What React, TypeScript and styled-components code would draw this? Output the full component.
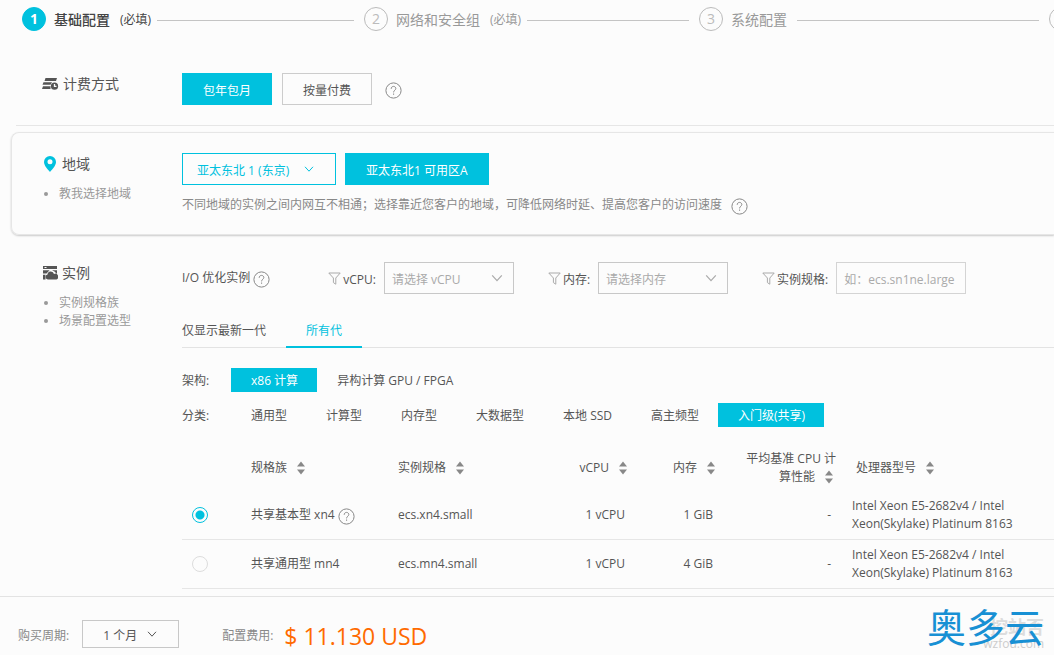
import React from "react";
import styled, { createGlobalStyle, css } from "styled-components";

const cyan = "#00c1de";

const GlobalStyle = createGlobalStyle`
  *, *::before, *::after { box-sizing: border-box; }
  body {
    margin: 0;
    background: #fcfcfc;
    color: #555;
    font: 12px/18px "Open Sans", "Noto Sans CJK SC", sans-serif;
    overflow-x: hidden;
  }
  button, input, select { font: inherit; color: inherit; margin: 0; }
  button { background: none; border: 0; padding: 0; cursor: pointer; }
  a { color: inherit; text-decoration: none; }
`;

const Page = styled.div`
  min-height: 100vh;
  display: flex;
  flex-direction: column;
  overflow: hidden;
`;

const Main = styled.main`
  flex: 1;
`;

/* Stepper */
const Steps = styled.ol`
  list-style: none;
  margin: 0;
  padding: 0 0 0 22px;
  height: 38px;
  display: grid;
  grid-template-columns: 342fr 335fr 350fr 5fr;
`;

const Step = styled.li<{ $active?: boolean }>`
  display: flex;
  align-items: center;
  min-width: 0;
  white-space: nowrap;
  font-size: 14px;
  font-weight: ${(p) => (p.$active ? 500 : 400)};
  color: ${(p) => (p.$active ? "#444" : "#999")};
  &::after {
    content: "";
    flex: 1;
    height: 1px;
    margin: 2px 10px 0 0;
    background: #c4c4c4;
  }
  &:last-child::after { display: none; }
`;

const StepTitle = styled.span`
  margin-right: 10px;
  padding-top: 2px;
`;

const StepNote = styled.small`
  margin-right: 6px;
  padding-top: 2px;
  font-size: 12px;
  font-weight: 400;
`;

const StepNumber = styled.span<{ $active?: boolean }>`
  flex: none;
  display: grid;
  place-items: center;
  width: 24px;
  height: 24px;
  margin-right: 8px;
  border-radius: 50%;
  border: 1px solid ${(p) => (p.$active ? cyan : "#bbb")};
  background: ${(p) => (p.$active ? cyan : "transparent")};
  color: ${(p) => (p.$active ? "#fff" : "#bbb")};
  font-weight: ${(p) => (p.$active ? 700 : 400)};
`;

/* Sections */
const sectionGrid = css`
  display: grid;
  grid-template-columns: 140px minmax(0, 1fr);
`;

const BillingSection = styled.section`
  ${sectionGrid}
  margin-left: 16px;
  padding: 35px 0 20px 26px;
  border-bottom: 1px solid #e6e6e6;
`;

const RegionSection = styled.section`
  ${sectionGrid}
  margin: 6px 0 0 11px;
  padding: 20px 0 20px 30px;
  border: 1px solid #e6e6e6;
  border-right: 0;
  border-radius: 8px 0 0 8px;
  box-shadow: 0 1px 2px rgba(0, 0, 0, 0.2);
`;

const InstanceSection = styled.section`
  ${sectionGrid}
  padding: 27px 0 7px 42px;
`;

const SectionTitle = styled.h2`
  display: flex;
  align-items: center;
  gap: 4px;
  height: 22px;
  margin: 0;
  font-size: 14px;
  font-weight: 400;
  color: #555;
`;

const HelpLinks = styled.ul`
  list-style: none;
  margin: 10px 0 0;
  padding: 0;
  color: #999;
  li { display: flex; align-items: center; }
  li::before {
    content: "";
    width: 4px;
    height: 4px;
    margin: 0 11px 0 2px;
    border-radius: 50%;
    background: #999;
  }
`;

const Row = styled.div<{ $gap: number }>`
  display: flex;
  align-items: center;
  gap: ${(p) => p.$gap}px;
`;

const ChoiceButton = styled.button<{ $selected?: boolean }>`
  height: 32px;
  padding: 4px 20px 0;
  border: 1px solid ${(p) => (p.$selected ? cyan : "#ccc")};
  background: ${(p) => (p.$selected ? cyan : "transparent")};
  color: ${(p) => (p.$selected ? "#fff" : "#555")};
`;

const IconButton = styled.button`
  display: inline-flex;
  margin: 2px 0 0 3px;
  color: #888;
`;

const HintText = styled.p`
  display: flex;
  align-items: center;
  gap: 6px;
  margin: 11px 0 0;
  height: 18px;
  color: #888;
`;

/* Drop-downs */
const SelectBox = styled.span<{ $width: number; $tone?: "brand" | "dark" }>`
  position: relative;
  display: inline-flex;
  width: ${(p) => p.$width}px;
  height: ${(p) => (p.$tone === "dark" ? 28 : 32)}px;
  color: ${(p) => (p.$tone === "brand" ? cyan : p.$tone === "dark" ? "#555" : "#aaa")};
  select {
    appearance: none;
    width: 100%;
    padding: 3px ${(p) => (p.$tone ? 20 : 8)}px 0 ${(p) => (p.$tone === "brand" ? 14 : p.$tone === "dark" ? 20 : 7)}px;
    border: 1px solid ${(p) => (p.$tone === "brand" ? cyan : "#c8c8c8")};
    border-radius: 0;
    background: transparent;
  }
  svg {
    position: absolute;
    top: 50%;
    right: ${(p) => (p.$tone ? 22 : 11)}px;
    transform: translateY(-50%);
    pointer-events: none;
  }
`;

const Filters = styled.div`
  display: flex;
  align-items: center;
  gap: 34px;
  white-space: nowrap;
`;

const Optimized = styled.span`
  display: flex;
  align-items: center;
  margin-right: 24px;
`;

const Filter = styled.label`
  display: flex;
  align-items: center;
`;

const FilterName = styled.span`
  margin: 0 8px 0 2px;
  padding-top: 4px;
`;

const SpecInput = styled.input`
  width: 130px;
  height: 32px;
  padding: 2px 7px 0;
  border: 1px solid #d4d4d4;
  background: transparent;
  &::placeholder { color: #aaa; opacity: 1; }
`;

const Tabs = styled.div`
  display: flex;
  height: 36px;
  margin-top: 18px;
  border-bottom: 1px solid #e3e3e3;
`;

const Tab = styled.button<{ $active?: boolean }>`
  height: 36px;
  padding: 4px ${(p) => (p.$active ? 20 : 0)}px 0;
  margin-right: 20px;
  border-bottom: 2px solid ${(p) => (p.$active ? cyan : "transparent")};
  color: ${(p) => (p.$active ? cyan : "#555")};
`;

const OptionRow = styled.div<{ $top: number }>`
  display: flex;
  align-items: center;
  height: 24px;
  margin-top: ${(p) => p.$top}px;
`;

const OptionLabel = styled.span`
  width: 49px;
  padding-top: 2px;
`;

const Option = styled.button<{ $selected?: boolean }>`
  height: 24px;
  padding: 2px 19px 0 20px;
  white-space: nowrap;
  background: ${(p) => (p.$selected ? cyan : "transparent")};
  color: ${(p) => (p.$selected ? "#fff" : "inherit")};
`;

/* Instance table */
const Table = styled.table`
  width: 100%;
  margin-top: 16px;
  table-layout: fixed;
  border-collapse: separate;
  border-spacing: 0;
`;

const HeadCell = styled.th<{ $right?: boolean; $left?: number }>`
  height: 48px;
  padding: 2px 0 0 ${(p) => p.$left ?? 0}px;
  font-weight: 400;
  text-align: ${(p) => (p.$right ? "right" : "left")};
  button { text-align: inherit; }
  svg { margin: 0 3px 0 10px; vertical-align: -3px; }
`;

const Cell = styled.td<{ $right?: boolean; $left?: number }>`
  height: 49px;
  padding: 0 ${(p) => (p.$right ? 5 : 0)}px 0 ${(p) => p.$left ?? 0}px;
  border-bottom: 1px solid #e6e6e6;
  text-align: ${(p) => (p.$right ? "right" : "left")};
`;

const Processor = styled.span`
  display: block;
  max-width: 172px;
`;

const Radio = styled.input`
  appearance: none;
  display: block;
  width: 16px;
  height: 16px;
  margin: 0;
  border: 1px solid #ddd;
  border-radius: 50%;
  &:checked {
    border-color: ${cyan};
    background: radial-gradient(circle, ${cyan} 4px, transparent 5px);
  }
`;

/* Price bar */
const PriceBar = styled.footer`
  position: relative;
  display: flex;
  align-items: center;
  height: 59px;
  padding: 16px 18px 0;
  border-top: 1px solid #e3e3e3;
  color: #888;
`;

const Period = styled.label`
  display: flex;
  align-items: center;
  gap: 13px;
  margin-right: 43px;
`;

const BarText = styled.span`
  padding-top: 4px;
`;

const Price = styled.strong`
  margin-left: 11px;
  padding-top: 4px;
  font-size: 23px;
  line-height: 28px;
  font-weight: 400;
  color: #ff6a00;
`;

const Watermark = styled.div`
  position: absolute;
  right: 10px;
  bottom: 8px;
  font-size: 39px;
  line-height: 40px;
  color: #1890d4;
`;

const FaintMark = styled.div`
  position: absolute;
  right: 10px;
  bottom: 4px;
  text-align: right;
  font-size: 12px;
  line-height: 14px;
  color: #ccc;
  b {
    display: block;
    font-size: 18px;
    line-height: 20px;
    color: #ddd;
  }
`;

const HelpIcon = () => (
  <svg width="17" height="17" viewBox="0 0 17 17" fill="none" stroke="currentColor">
    <circle cx="8.5" cy="8.5" r="7.6" />
    <path d="M6.2 6.8c0-1.5 1-2.4 2.3-2.4s2.3.9 2.3 2.1c0 1.6-2.2 1.9-2.2 3.9" />
    <path d="M8.6 11.5v1.3" />
  </svg>
);

const Help = ({ label }: { label: string }) => (
  <IconButton type="button" aria-label={label}>
    <HelpIcon />
  </IconButton>
);

const Chevron = ({ size = 10 }: { size?: number }) => (
  <svg width={size} height={size} viewBox="0 0 10 10" fill="none" stroke="currentColor">
    <path d="M1 2.8 5 7.2 9 2.8" />
  </svg>
);

const FunnelIcon = () => (
  <svg width="13" height="13" viewBox="0 0 13 13" fill="none" stroke="#aaa">
    <path d="M.8 1h11.400L7.800 6v6.200l-2.400-1.600V6z" />
  </svg>
);

const SortIcon = () => (
  <svg width="8" height="14" viewBox="0 0 8 14" fill="#888">
    <path d="M0 5.5 4 .5l4 5zM0 8.5h8l-4 5z" />
  </svg>
);

const BillingIcon = () => (
  <svg width="17" height="14" viewBox="0 0 17 14" fill="#555">
    <path d="M3.500 1H15l-1 3H2.500zM1.500 5.200H10L8.500 7.800H.5zM1 9.200h7.500v2.800H0z" />
    <circle cx="12.500" cy="9.200" r="3.600" />
    <path d="M12.500 7v2.400h2" fill="none" stroke="#fcfcfc" strokeWidth="1.300" />
  </svg>
);

const PinIcon = () => (
  <svg width="16" height="18" viewBox="0 0 16 18">
    <path
      fill={cyan}
      fillRule="evenodd"
      d="M8 1a6 6 0 0 1 6 6c0 3.500-3.500 7-6 10-2.500-3-6-6.500-6-10a6 6 0 0 1 6-6zm0 3.200a2.500 2.500 0 1 0 0 5 2.500 2.500 0 0 0 0-5z"
    />
  </svg>
);

const InstanceIcon = () => (
  <svg width="16" height="16" viewBox="0 0 16 16" fill="#555">
    <path d="M1 1h14v3H1zM1 5.200h6.500L4.500 8.500H1zM10 5.200h5V9l-2.500-2.500zM1 9.800h2.500v4.700H1z" />
    <path d="M5.800 14.500a2.500 2.500 0 0 1-.3-4.900A3.300 3.300 0 0 1 12 9a2.800 2.800 0 0 1 2.500 5.500z" />
    <path d="M2.500 2.500h2" stroke="#fcfcfc" />
  </svg>
);

const steps = [
  { number: "1", title: "基础配置", note: "(必填)", active: true },
  { number: "2", title: "网络和安全组", note: "(必填)" },
  { number: "3", title: "系统配置" },
];

const categories = ["通用型", "计算型", "内存型", "大数据型", "本地 SSD", "高主频型", "入门级(共享)"];

const instances = [
  { family: "共享基本型 xn4", help: true, spec: "ecs.xn4.small", cpu: "1 vCPU", memory: "1 GiB" },
  { family: "共享通用型 mn4", help: false, spec: "ecs.mn4.small", cpu: "1 vCPU", memory: "4 GiB" },
];

const columns = [
  { title: "规格族" },
  { title: "实例规格" },
  { title: "vCPU", right: true },
  { title: "内存", right: true },
  { title: "平均基准 CPU 计算性能", right: true, left: 26 },
  { title: "处理器型号", left: 20 },
];

export default function App() {
  const [selected, setSelected] = React.useState("ecs.xn4.small");
  return (
    <Page>
      <GlobalStyle />
      <Main>
        <Steps>
          {steps.map((s) => (
            <Step key={s.number} $active={s.active}>
              <StepNumber $active={s.active}>{s.number}</StepNumber>
              <StepTitle>{s.title}</StepTitle>
              {s.note ? <StepNote>{s.note}</StepNote> : null}
            </Step>
          ))}
          <Step>
            <StepNumber />
          </Step>
        </Steps>

        <BillingSection>
          <SectionTitle>
            <BillingIcon />
            计费方式
          </SectionTitle>
          <Row $gap={10}>
            <ChoiceButton type="button" $selected>包年包月</ChoiceButton>
            <ChoiceButton type="button">按量付费</ChoiceButton>
            <Help label="计费方式" />
          </Row>
        </BillingSection>

        <RegionSection>
          <div>
            <SectionTitle>
              <PinIcon />
              地域
            </SectionTitle>
            <HelpLinks>
              <li><a href="#region">教我选择地域</a></li>
            </HelpLinks>
          </div>
          <div>
            <Row $gap={9}>
              <SelectBox $width={154} $tone="brand">
                <select aria-label="地域">
                  <option>亚太东北 1 (东京)</option>
                </select>
                <Chevron />
              </SelectBox>
              <ChoiceButton type="button" $selected>亚太东北1 可用区A</ChoiceButton>
            </Row>
            <HintText>
              不同地域的实例之间内网互不相通；选择靠近您客户的地域，可降低网络时延、提高您客户的访问速度
              <Help label="地域" />
            </HintText>
          </div>
        </RegionSection>

        <InstanceSection>
          <div>
            <SectionTitle>
              <InstanceIcon />
              实例
            </SectionTitle>
            <HelpLinks>
              <li><a href="#family">实例规格族</a></li>
              <li><a href="#scene">场景配置选型</a></li>
            </HelpLinks>
          </div>
          <div>
            <Filters>
              <Optimized>
                I/O 优化实例
                <Help label="I/O 优化实例" />
              </Optimized>
              <Filter>
                <FunnelIcon />
                <FilterName>vCPU:</FilterName>
                <SelectBox $width={130}>
                  <select><option>请选择 vCPU</option></select>
                  <Chevron size={12} />
                </SelectBox>
              </Filter>
              <Filter>
                <FunnelIcon />
                <FilterName>内存:</FilterName>
                <SelectBox $width={130}>
                  <select><option>请选择内存</option></select>
                  <Chevron size={12} />
                </SelectBox>
              </Filter>
              <Filter>
                <FunnelIcon />
                <FilterName>实例规格:</FilterName>
                <SpecInput type="text" placeholder="如：ecs.sn1ne.large" />
              </Filter>
            </Filters>

            <Tabs>
              <Tab type="button">仅显示最新一代</Tab>
              <Tab type="button" $active>所有代</Tab>
            </Tabs>

            <OptionRow $top={20}>
              <OptionLabel>架构:</OptionLabel>
              <Option type="button" $selected>x86 计算</Option>
              <Option type="button">异构计算 GPU / FPGA</Option>
            </OptionRow>
            <OptionRow $top={11}>
              <OptionLabel>分类:</OptionLabel>
              {categories.map((c) => (
                <Option key={c} type="button" $selected={c === "入门级(共享)"}>{c}</Option>
              ))}
            </OptionRow>

            <Table>
              <colgroup>
                <col width="69" />
                <col width="147" />
                <col width="152" />
                <col width="80" />
                <col width="88" />
                <col width="118" />
                <col />
              </colgroup>
              <thead>
                <tr>
                  <HeadCell />
                  {columns.map((c) => (
                    <HeadCell key={c.title} $right={c.right} $left={c.left}>
                      <button type="button">
                        {c.title}
                        <SortIcon />
                      </button>
                    </HeadCell>
                  ))}
                </tr>
              </thead>
              <tbody>
                {instances.map((row) => (
                  <tr key={row.spec}>
                    <Cell $left={10}>
                      <Radio
                        type="radio"
                        name="instance"
                        aria-label={row.family}
                        checked={selected === row.spec}
                        onChange={() => setSelected(row.spec)}
                      />
                    </Cell>
                    <Cell>
                      <Row $gap={0}>
                        {row.family}
                        {row.help ? <Help label={row.family} /> : null}
                      </Row>
                    </Cell>
                    <Cell>{row.spec}</Cell>
                    <Cell $right>{row.cpu}</Cell>
                    <Cell $right>{row.memory}</Cell>
                    <Cell $right>-</Cell>
                    <Cell $left={16}>
                      <Processor>Intel Xeon E5-2682v4 / Intel Xeon(Skylake) Platinum 8163</Processor>
                    </Cell>
                  </tr>
                ))}
              </tbody>
            </Table>
          </div>
        </InstanceSection>
      </Main>

      <PriceBar>
        <Period>
          <BarText>购买周期:</BarText>
          <SelectBox $width={97} $tone="dark">
            <select><option>1 个月</option></select>
            <Chevron />
          </SelectBox>
        </Period>
        <BarText>配置费用:</BarText>
        <Price>$ 11.130 USD</Price>
        <FaintMark>
          <b>挖站否</b>
          wzfou.com
        </FaintMark>
        <Watermark>奥多云</Watermark>
      </PriceBar>
    </Page>
  );
}
